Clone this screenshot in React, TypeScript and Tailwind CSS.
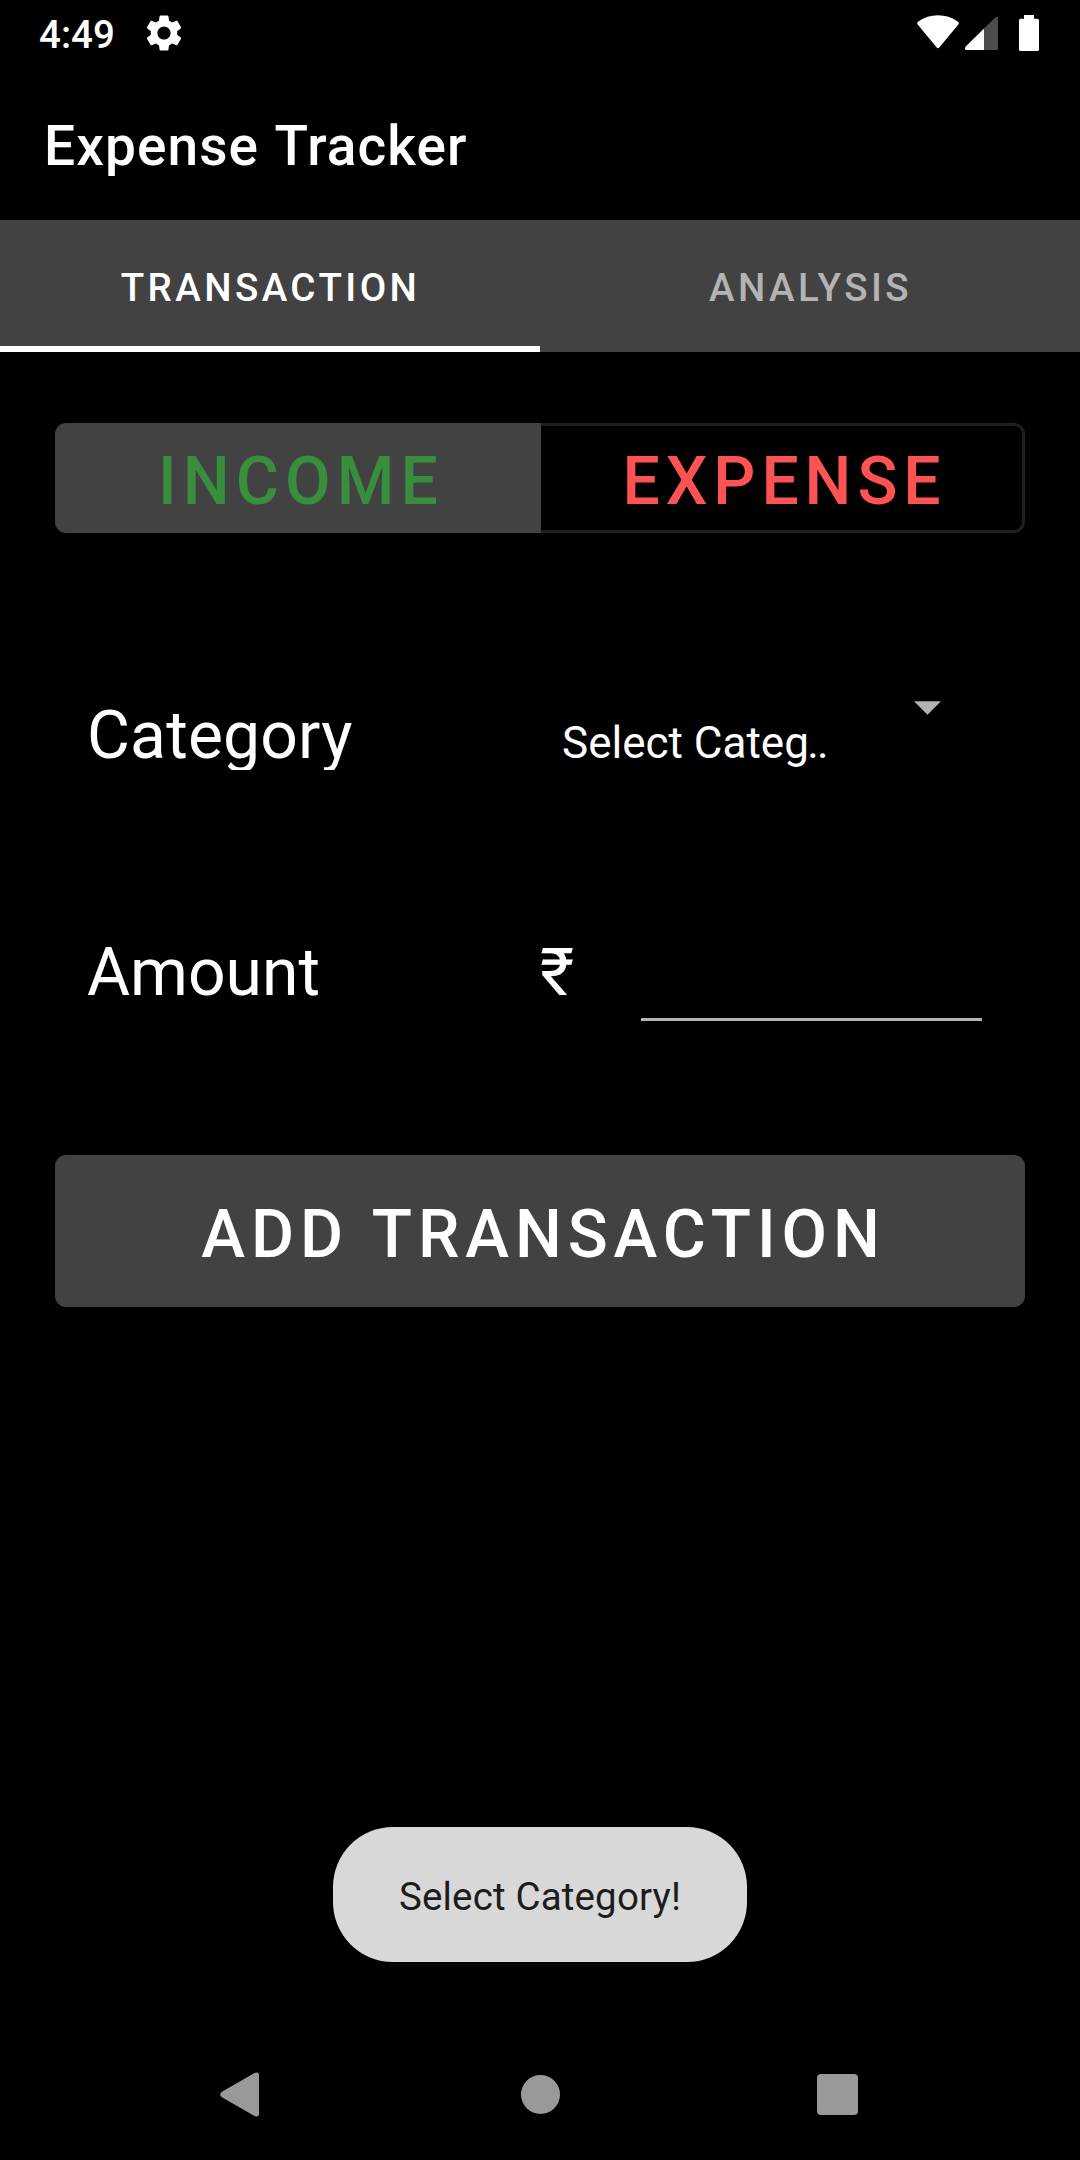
function StatusBar() {
  return (
    <div className="flex h-[66px] items-center justify-between pl-[39px] pr-[41px]">
      <div className="flex items-center gap-[32px]">
        <span className="pt-[3px] text-[38.5px] font-medium leading-[66px]">4:49</span>
        <svg className="-ml-[5px] h-[44px] w-[44px]" viewBox="0 0 24 24" fill="white">
          <path d="M19.14 12.94c.04-.3.06-.61.06-.94 0-.32-.02-.64-.07-.94l2.03-1.58c.18-.14.23-.41.12-.61l-1.92-3.32c-.12-.22-.37-.29-.59-.22l-2.39.96c-.5-.38-1.03-.7-1.62-.94L14.4 2.81c-.04-.24-.24-.41-.48-.41h-3.84c-.24 0-.43.17-.47.41l-.36 2.54c-.59.24-1.13.57-1.62.94l-2.39-.96c-.22-.08-.47 0-.59.22L2.74 8.87c-.12.21-.08.47.12.61l2.03 1.58c-.05.3-.09.63-.09.94s.02.64.07.94l-2.03 1.58c-.18.14-.23.41-.12.61l1.92 3.32c.12.22.37.29.59.22l2.39-.96c.5.38 1.03.7 1.62.94l.36 2.54c.05.24.24.41.48.41h3.84c.24 0 .44-.17.47-.41l.36-2.54c.59-.24 1.13-.56 1.62-.94l2.39.96c.22.08.47 0 .59-.22l1.92-3.32c.12-.22.07-.47-.12-.61l-2.01-1.58zM12 15.6c-1.98 0-3.6-1.62-3.6-3.6s1.62-3.6 3.6-3.6 3.6 1.62 3.6 3.6-1.62 3.6-3.6 3.6z" />
        </svg>
      </div>
      <div className="flex items-center">
        <svg className="h-[36px] w-[42px]" viewBox="0 0 42 36" fill="white">
          <path d="M0.7 9.5Q-.6 7.8 1.3 6.600Q10 .3 21 .3T40.700 6.600Q42.600 7.800 41.300 9.500L22.300 32.500Q21 33.900 19.700 32.500Z" />
        </svg>
        <svg className="ml-[6px] h-[36px] w-[33px]" viewBox="0 0 33 36">
          <path d="M19 13.500V35H1.200Q-1 34.500.5 31.800Z" fill="white" />
          <path d="M19 13.500L30.500 2.300Q33 .8 33 3.500V33.500Q33 35 31.500 35H19Z" fill="#4d4d4d" />
        </svg>
        <svg className="ml-[21px] h-[36px] w-[20px]" viewBox="0 0 20 36" fill="white">
          <path d="M5 0H15V3.700H18.500Q20 3.700 20 5.200V34.500Q20 36 18.500 36H1.500Q0 36 0 34.500V5.200Q0 3.700 1.500 3.700H5Z" />
        </svg>
      </div>
    </div>
  );
}

function Tabs() {
  return (
    <div className="grid h-[132px] grid-cols-2 bg-[#424242] text-center text-[38.5px] font-medium leading-[123px] tracking-[3.44px]">
      <div className="h-[132px] border-b-[6px] border-white pl-[1px] pt-[6px]">TRANSACTION</div>
      <div className="h-[132px] pl-[1px] pt-[6px] text-[#b3b3b3]">ANALYSIS</div>
    </div>
  );
}

function TypeToggle() {
  return (
    <div className="mt-[71px] flex h-[110px] text-center text-[66px] font-medium">
      <button className="w-[486px] rounded-l-[11px] bg-[#424242] pl-[6px] pt-[7px] leading-[103px] tracking-[6.15px] text-[#388e3c]">
        INCOME
      </button>
      <button className="flex-1 rounded-r-[11px] border-y-[3px] border-r-[3px] border-[#1f1f1f] pl-[6px] pt-[7px] leading-[97px] tracking-[5.95px] text-[#ff5252]">
        EXPENSE
      </button>
    </div>
  );
}

function CategoryRow() {
  return (
    <div className="mt-[168px] flex h-[69px] pl-[32px]">
      <span className="h-[69px] w-[475px] overflow-hidden text-[66px] leading-[69px] tracking-[0.15px]">
        Category
      </span>
      <span className="w-[352px] pt-[8px] text-[44px] leading-[69px]">
        Select Cate<span className="tracking-[-1.7px]">g..</span>
      </span>
      <svg className="h-[14px] w-[27px]" viewBox="0 0 27 14" fill="#b3b3b3">
        <path d="M0 0.300H27L13.500 13.800Z" />
      </svg>
    </div>
  );
}

function AmountRow() {
  return (
    <div className="mt-[168px] flex h-[83px] pl-[32px] text-[66px] leading-[69px]">
      <span className="w-[453px]">Amount</span>
      <span className="w-[101px]">₹</span>
      <div className="w-[341px] border-b-[3px] border-[#b3b3b3]" />
    </div>
  );
}

function NavBar() {
  return (
    <div className="mt-[108px] flex h-[49px] items-center pl-[220px] text-[#999999]">
      <svg className="h-[45px] w-[39px]" viewBox="0 0 39 46" preserveAspectRatio="none" fill="currentColor">
        <path d="M1.500 20.500L34.500 1.100Q39 -.800 39 3.500V42.500Q39 46.800 34.500 44.900L1.500 25.500Q-1 23 1.500 20.500Z" />
      </svg>
      <div className="ml-[262px] h-[39px] w-[39px] rounded-full bg-[#999999]" />
      <div className="ml-[257px] h-[41px] w-[41px] rounded-[4px] bg-[#999999]" />
    </div>
  );
}

export default function App() {
  return (
    <div className="h-[2160px] w-[1080px] overflow-hidden bg-black font-['Roboto',sans-serif] text-white">
      <StatusBar />
      <h1 className="h-[154px] pl-[44px] pt-[3px] text-[55px] font-medium leading-[154px] tracking-[1.1px] [word-spacing:1.8px]">
        Expense Tracker
      </h1>
      <Tabs />
      <main className="px-[55px]">
        <TypeToggle />
        <CategoryRow />
        <AmountRow />
        <button className="mt-[134px] h-[152px] w-full rounded-[11px] bg-[#424242] pl-[7px] pt-[7px] text-[66px] font-medium leading-[145px] tracking-[5.9px] [word-spacing:2px]">
          ADD TRANSACTION
        </button>
      </main>
      <div className="mx-auto mt-[520px] h-[135px] w-[414px] rounded-[60px] bg-[#d8d8d8] pt-[2px] text-center text-[38.5px] leading-[135px] tracking-[0.16px] text-[#1c1c1c]">
        Select Category!
      </div>
      <NavBar />
    </div>
  );
}
